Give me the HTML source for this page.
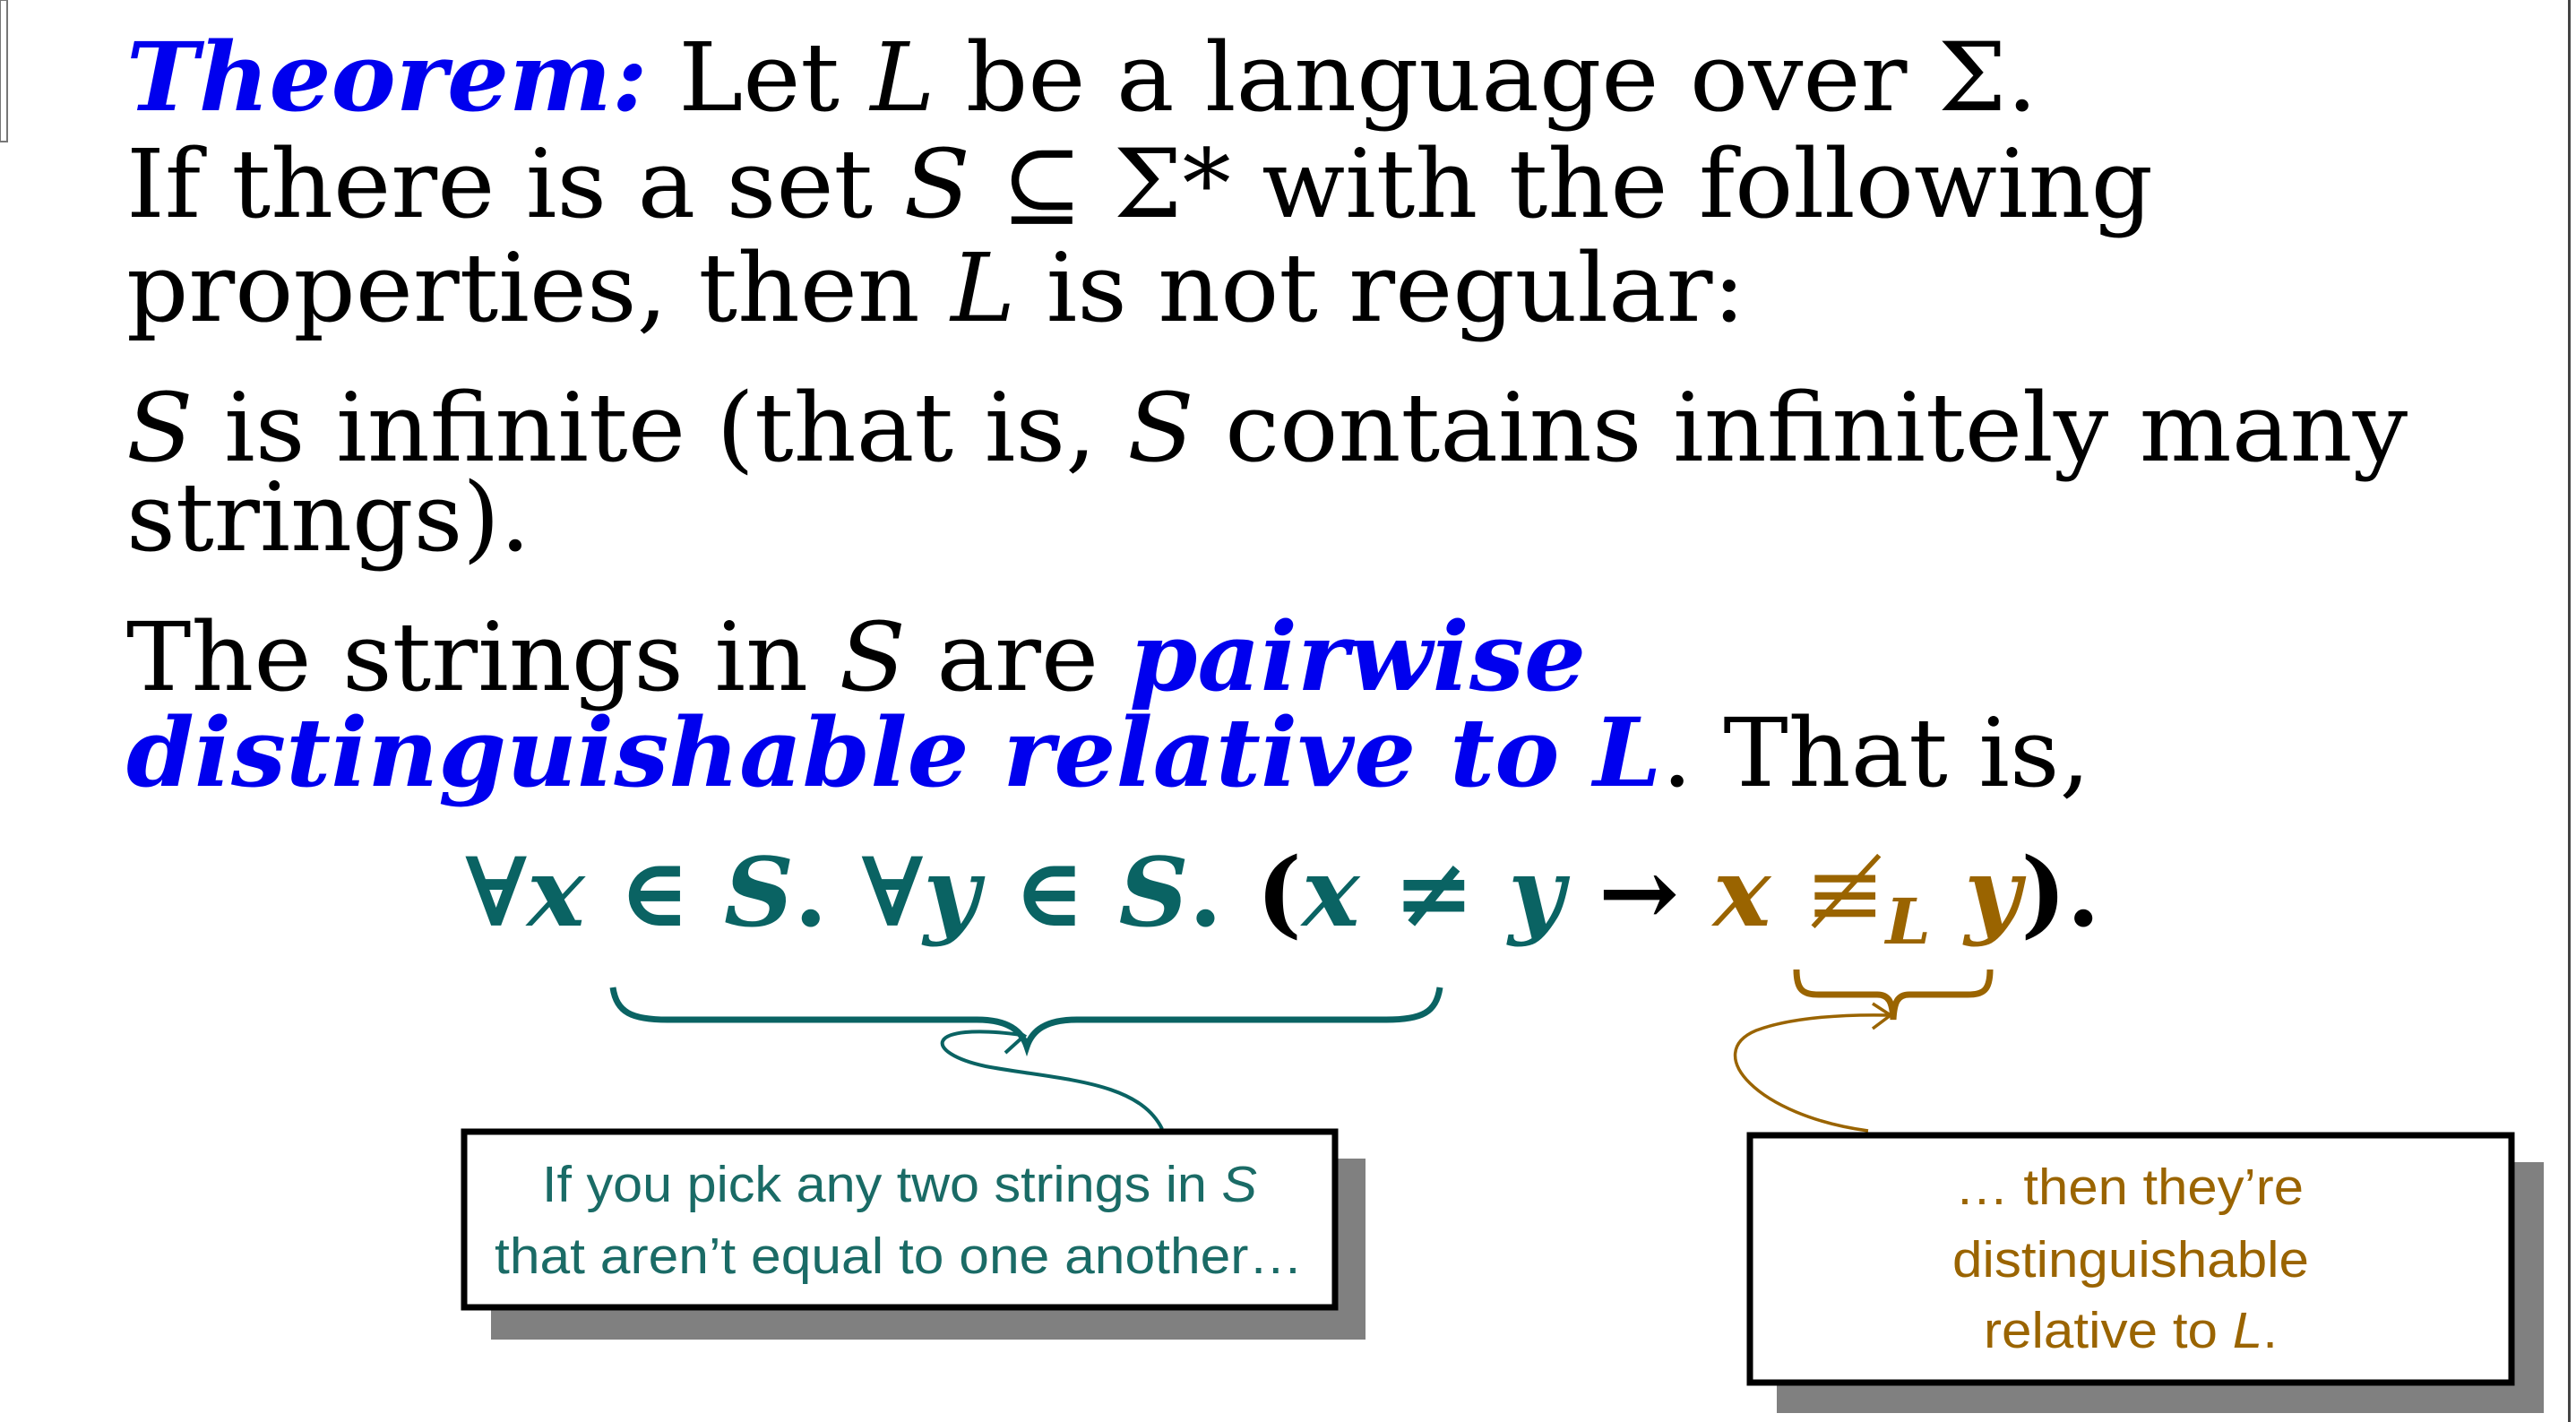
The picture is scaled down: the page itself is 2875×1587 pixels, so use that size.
<!DOCTYPE html>
<html><head><meta charset="utf-8"><style>
html,body{margin:0;padding:0;background:#fff;width:2875px;height:1587px;overflow:hidden}
svg{display:block}
.m{font-family:"DejaVu Serif Condensed","DejaVu Serif",serif;font-size:106px;fill:#000}
.b{font-family:"Liberation Sans Narrow","Liberation Sans",sans-serif;font-size:57px}
</style></head><body>
<svg width="2875" height="1587" viewBox="0 0 2875 1587" xmlns="http://www.w3.org/2000/svg">
<rect x="0" y="0" width="2875" height="1587" fill="#fff"/>
<rect x="0" y="0" width="8" height="158" fill="#fff" stroke="#777" stroke-width="2"/>
<rect x="2866" y="0" width="3" height="1587" fill="#444"/>

<text class="m" x="141" y="123" textLength="2133" lengthAdjust="spacingAndGlyphs"><tspan fill="#0000ee" font-weight="bold" font-style="italic">Theorem:</tspan> Let <tspan font-style="italic">L</tspan> be a language over Σ.</text>
<text class="m" x="141" y="242" textLength="2262" lengthAdjust="spacingAndGlyphs">If there is a set <tspan font-style="italic">S</tspan> ⊆ Σ* with the following</text>
<text class="m" x="141" y="358" textLength="1807" lengthAdjust="spacingAndGlyphs">properties, then <tspan font-style="italic">L</tspan> is not regular:</text>
<text class="m" x="141" y="514" textLength="2546" lengthAdjust="spacingAndGlyphs"><tspan font-style="italic">S</tspan> is infinite (that is, <tspan font-style="italic">S</tspan> contains infinitely many</text>
<text class="m" x="141" y="614" textLength="451" lengthAdjust="spacingAndGlyphs">strings).</text>
<text class="m" x="141" y="770" textLength="1629" lengthAdjust="spacingAndGlyphs">The strings in <tspan font-style="italic">S</tspan> are <tspan fill="#0000ee" font-weight="bold" font-style="italic">pairwise</tspan></text>
<text class="m" x="141" y="877" textLength="2192" lengthAdjust="spacingAndGlyphs"><tspan fill="#0000ee" font-weight="bold" font-style="italic">distinguishable relative to L</tspan>. That is,</text>

<text class="m" x="519" y="1033" textLength="1825" lengthAdjust="spacingAndGlyphs" font-weight="bold"><tspan fill="#0a6363">∀<tspan font-style="italic">x</tspan> ∈ <tspan font-style="italic">S</tspan>. ∀<tspan font-style="italic">y</tspan> ∈ <tspan font-style="italic">S</tspan>.</tspan> (<tspan fill="#0a6363" font-style="italic">x</tspan><tspan fill="#0a6363"> ≠ </tspan><tspan fill="#0a6363" font-style="italic">y</tspan> → <tspan fill="#9a6400"><tspan font-style="italic">x</tspan> <tspan font-weight="normal">≢</tspan><tspan font-style="italic" font-size="70" dy="20">L</tspan><tspan dy="-20"> </tspan><tspan font-style="italic">y</tspan></tspan>).</text>

<!-- teal brace -->
<path d="M684 1102 C688 1130 705 1138 745 1138 L1090 1138 C1125 1138 1140 1150 1146 1168 C1152 1150 1167 1138 1202 1138 L1547 1138 C1587 1138 1603 1130 1607 1102" fill="none" stroke="#0a6363" stroke-width="7"/>
<path d="M1297 1260 C1270 1205 1180 1205 1100 1190 C1030 1175 1030 1140 1140 1155" fill="none" stroke="#0a6363" stroke-width="4"/>
<path d="M1118 1140 L1143 1156 L1122 1175" fill="none" stroke="#0a6363" stroke-width="4"/>
<!-- brown brace -->
<path d="M2005 1082 C2005 1105 2012 1110 2030 1110 L2095 1110 C2108 1110 2112 1118 2113 1138 C2114 1118 2118 1110 2131 1110 L2196 1110 C2214 1110 2221 1105 2221 1082" fill="none" stroke="#9a6400" stroke-width="7"/>
<path d="M2085 1262 C1960 1245 1900 1175 1960 1150 C2000 1135 2060 1132 2108 1133" fill="none" stroke="#9a6400" stroke-width="3.5"/>
<path d="M2090 1120 L2110 1133 L2090 1148" fill="none" stroke="#9a6400" stroke-width="3.5"/>

<!-- left box -->
<rect x="548" y="1293" width="976" height="202" fill="#808080"/>
<rect x="518" y="1263" width="972" height="196" fill="#fff" stroke="#000" stroke-width="7"/>
<text class="b" x="605" y="1341" fill="#1a6b66" textLength="798" lengthAdjust="spacingAndGlyphs">If you pick any two strings in <tspan font-style="italic">S</tspan></text>
<text class="b" x="552" y="1421" fill="#1a6b66" textLength="902" lengthAdjust="spacingAndGlyphs">that aren’t equal to one another…</text>

<!-- right box -->
<rect x="1983" y="1297" width="856" height="280" fill="#808080"/>
<rect x="1953" y="1267" width="850" height="276" fill="#fff" stroke="#000" stroke-width="7"/>
<text class="b" x="2182" y="1344" fill="#9a6400" textLength="389" lengthAdjust="spacingAndGlyphs">… then they’re</text>
<text class="b" x="2179" y="1425" fill="#9a6400" textLength="398" lengthAdjust="spacingAndGlyphs">distinguishable</text>
<text class="b" x="2214" y="1504" fill="#9a6400" textLength="328" lengthAdjust="spacingAndGlyphs">relative to <tspan font-style="italic">L</tspan>.</text>
</svg>
</body></html>
